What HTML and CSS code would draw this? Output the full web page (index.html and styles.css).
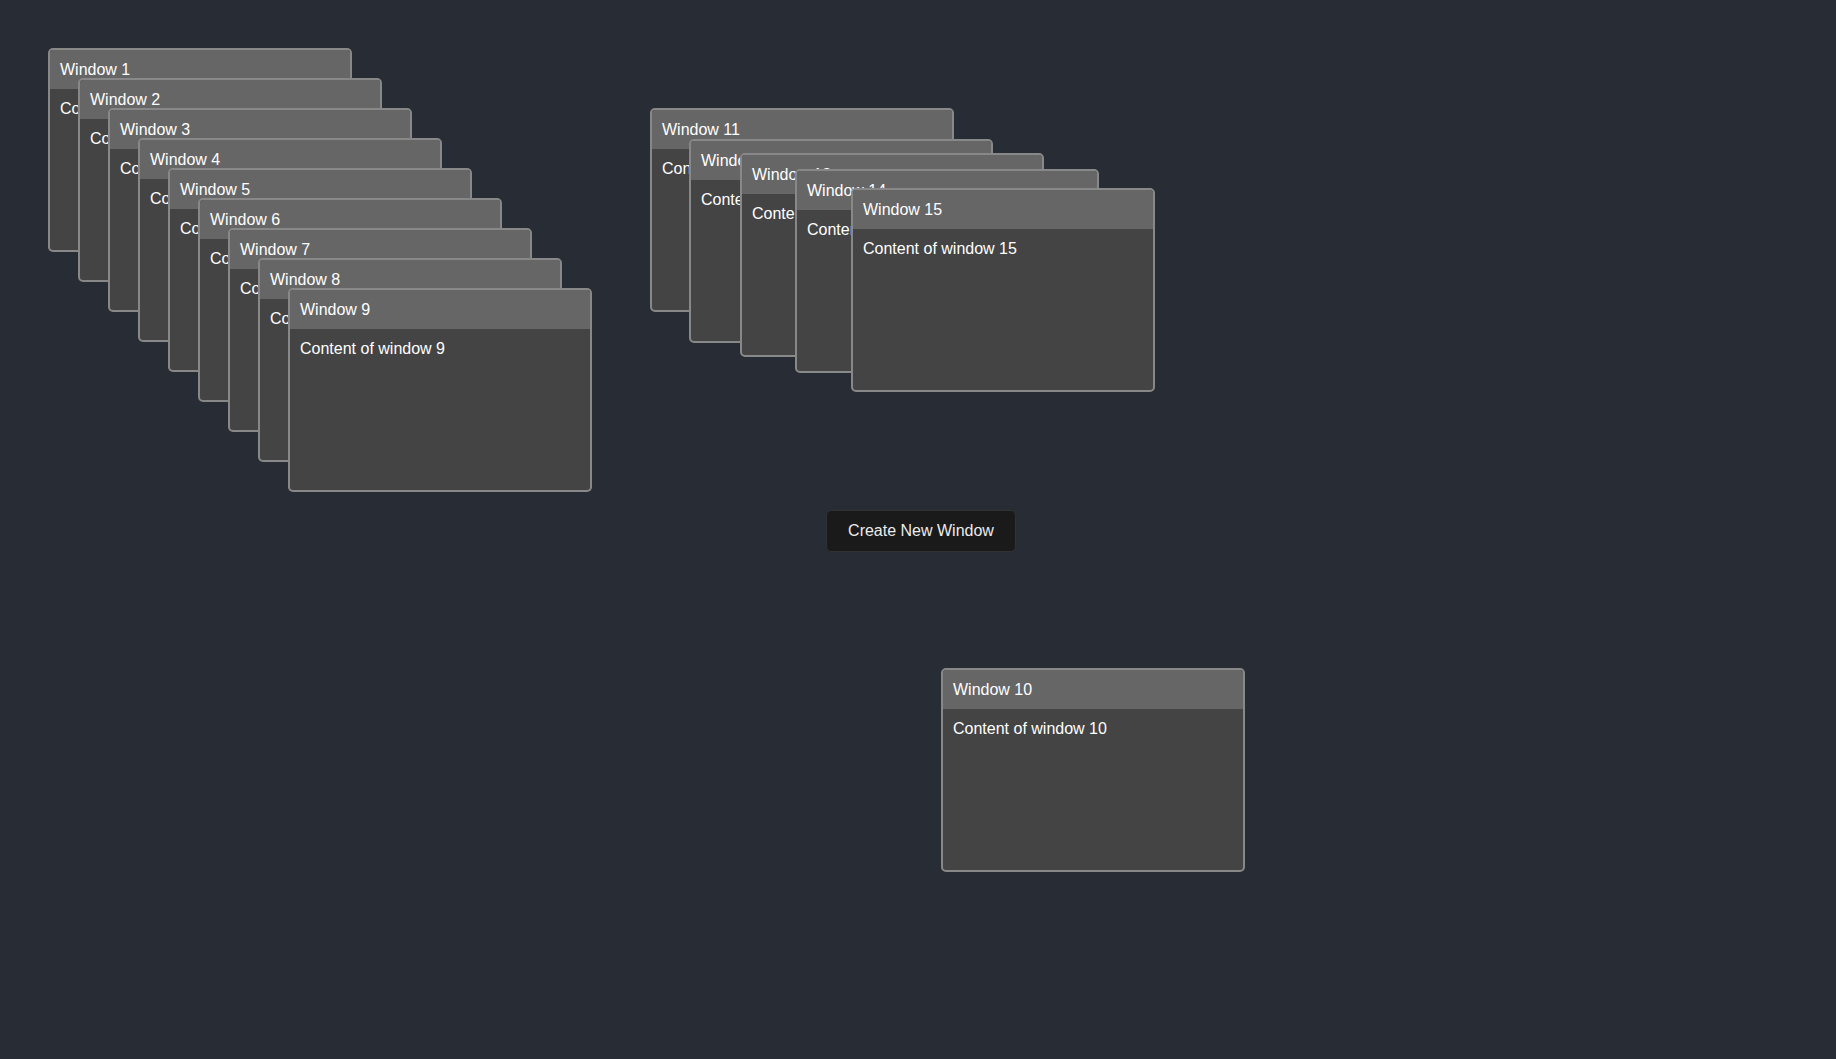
FILE: index.html
```html
<!DOCTYPE html>
<html>
<head>
<meta charset="utf-8">
<title>Windows</title>
<link rel="stylesheet" href="styles.css">
</head>
<body>
<div class="desktop">
  <div class="window" style="left:48px;top:48px"><div class="win-title">Window 1</div><div class="win-body">Content of window 1</div></div>
  <div class="window" style="left:78px;top:78px"><div class="win-title">Window 2</div><div class="win-body">Content of window 2</div></div>
  <div class="window" style="left:108px;top:108px"><div class="win-title">Window 3</div><div class="win-body">Content of window 3</div></div>
  <div class="window" style="left:138px;top:138px"><div class="win-title">Window 4</div><div class="win-body">Content of window 4</div></div>
  <div class="window" style="left:168px;top:168px"><div class="win-title">Window 5</div><div class="win-body">Content of window 5</div></div>
  <div class="window" style="left:198px;top:198px"><div class="win-title">Window 6</div><div class="win-body">Content of window 6</div></div>
  <div class="window" style="left:228px;top:228px"><div class="win-title">Window 7</div><div class="win-body">Content of window 7</div></div>
  <div class="window" style="left:258px;top:258px"><div class="win-title">Window 8</div><div class="win-body">Content of window 8</div></div>
  <div class="window" style="left:288px;top:288px"><div class="win-title">Window 9</div><div class="win-body">Content of window 9</div></div>
  <div class="window" style="left:941px;top:668px"><div class="win-title">Window 10</div><div class="win-body">Content of window 10</div></div>
  <div class="window" style="left:650px;top:108px"><div class="win-title">Window 11</div><div class="win-body">Content of window 11</div></div>
  <div class="window" style="left:689px;top:139px"><div class="win-title">Window 12</div><div class="win-body">Content of window 12</div></div>
  <div class="window" style="left:740px;top:153px"><div class="win-title">Window 13</div><div class="win-body">Content of window 13</div></div>
  <div class="window" style="left:795px;top:169px"><div class="win-title">Window 14</div><div class="win-body">Content of window 14</div></div>
  <div class="window" style="left:851px;top:188px"><div class="win-title">Window 15</div><div class="win-body">Content of window 15</div></div>
  <div class="toolbar">
    <button class="create-btn">Create New Window</button>
  </div>
</div>
</body>
</html>
```
FILE: styles.css
```css
html, body {
  margin: 0;
  padding: 0;
  background: #282c34;
  height: 100%;
}
body {
  font-family: "Liberation Sans", Arial, sans-serif;
  color: #ffffff;
  font-size: 16px;
}
.desktop {
  position: relative;
  width: 100%;
  height: 100vh;
  overflow: hidden;
}
.toolbar {
  display: flex;
  justify-content: center;
  padding-top: 510px;
  padding-left: 6px;
}
.create-btn {
  position: relative;
  z-index: 20;
  box-sizing: border-box;
  height: 42px;
  padding: 0 21px;
  background: #1a1a1a;
  color: #ececec;
  border: 1px solid #303236;
  border-radius: 5px;
  font-family: "Liberation Sans", Arial, sans-serif;
  font-size: 16px;
  font-weight: 500;
  cursor: pointer;
}
.window {
  position: absolute;
  z-index: 1;
  width: 300px;
  height: 200px;
  background: #444444;
  border: 2px solid #888888;
  border-radius: 5px;
  overflow: hidden;
  display: flex;
  flex-direction: column;
}
.win-title {
  background: #666666;
  padding: 10px;
  line-height: 19px;
  height: 19px;
  color: #ffffff;
}
.win-body {
  padding: 10px;
  line-height: 19px;
  color: #ffffff;
  flex: 1;
}
```
